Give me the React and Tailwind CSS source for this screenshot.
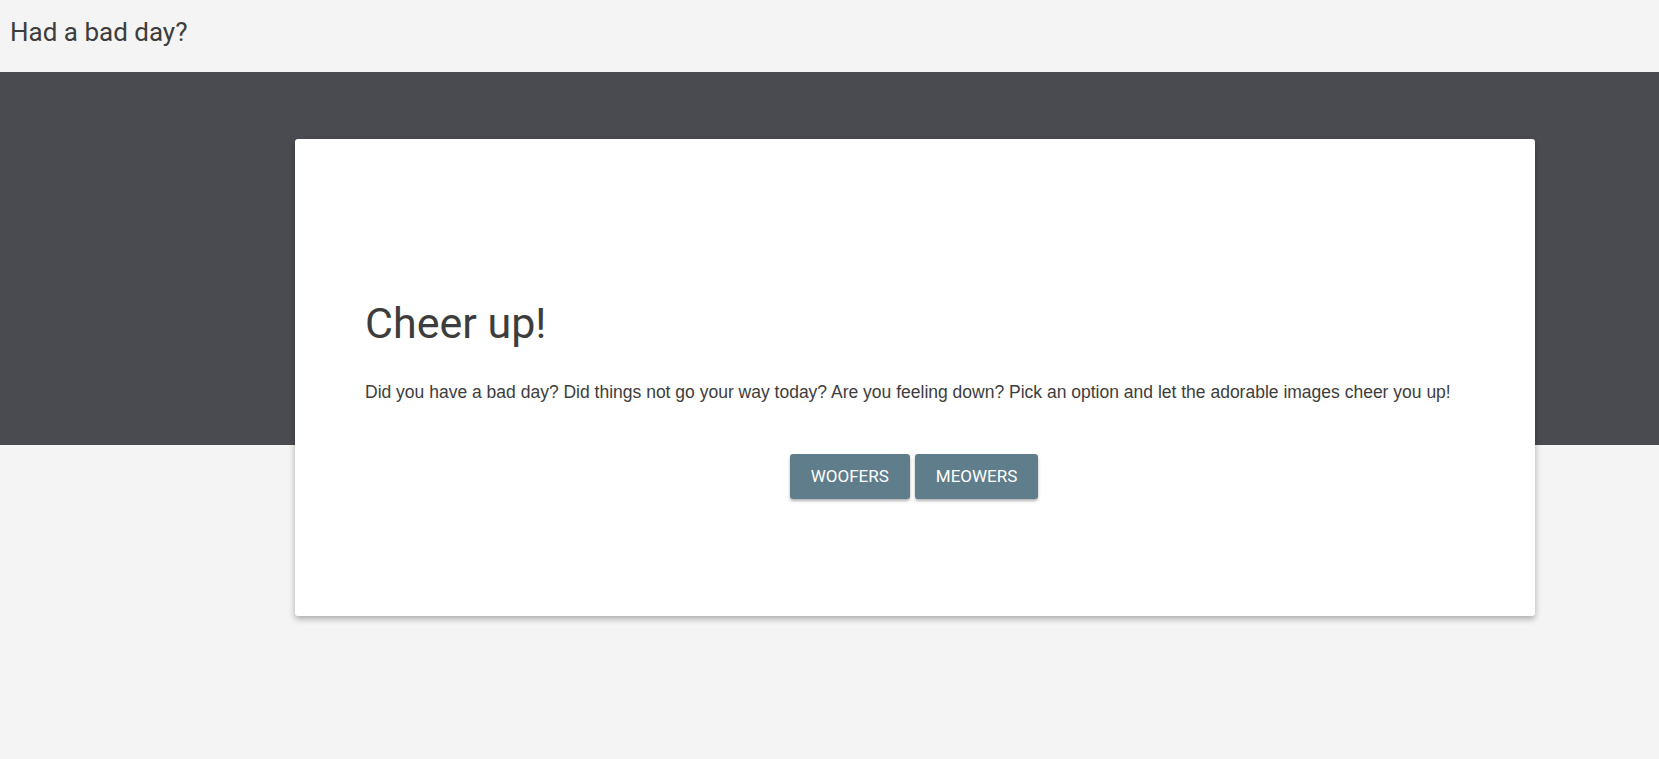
export default function App() {
  return (
    <div className="min-h-screen bg-[#f4f4f4] font-['Roboto',sans-serif] text-[#3d3d3d]">
      {/* Header */}
      <header className="h-[72px] flex items-center px-[10px] pb-[8px]">
        <h1 className="text-[26px] font-normal">Had a bad day?</h1>
      </header>

      {/* Hero band */}
      <div className="bg-[#4a4b51] h-[373px]" />

      {/* Card */}
      <div className="-mt-[306px] ml-[295px] w-[1240px] h-[477px] bg-white rounded-[3px] shadow-[0_3px_6px_rgba(0,0,0,0.3)] pl-[70px] pr-[72px] pt-[156px]">
        <h2 className="text-[43px] leading-[56px] font-normal">Cheer up!</h2>
        <p className="mt-[29px] font-['Liberation_Sans',Arial,sans-serif] text-[17.5px] leading-[25px]">
          Did you have a bad day? Did things not go your way today? Are you feeling down? Pick an option and let the adorable images cheer you up!
        </p>
        <div className="mt-[49px] flex justify-center gap-[5px]">
          <button className="h-[45px] px-[21px] bg-[#607d8b] text-white text-[17px] uppercase rounded-[3px] shadow-[0_2px_3px_rgba(0,0,0,0.3)]">
            Woofers
          </button>
          <button className="h-[45px] px-[21px] bg-[#607d8b] text-white text-[17px] uppercase rounded-[3px] shadow-[0_2px_3px_rgba(0,0,0,0.3)]">
            Meowers
          </button>
        </div>
      </div>
    </div>
  );
}
